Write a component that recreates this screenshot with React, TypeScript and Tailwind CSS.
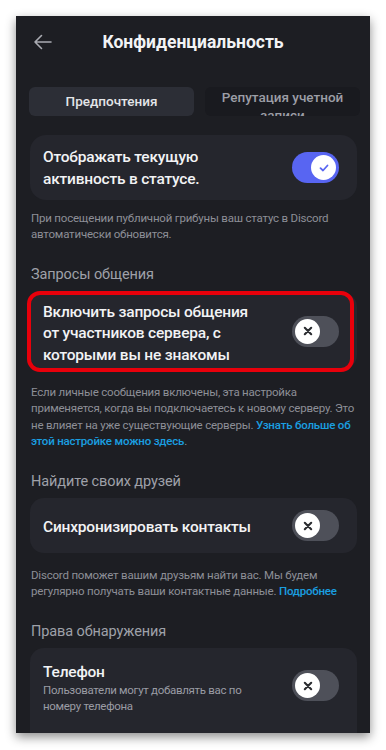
import React from "react";

const font = { fontFamily: 'Roboto, "Noto Sans", sans-serif' };

function Toggle({ on }: { on: boolean }) {
  if (on) {
    return (
      <div className="w-[47px] h-[31px] rounded-full bg-[#5865f2] flex items-center justify-end pr-[3px] shrink-0">
        <div className="w-[25px] h-[25px] rounded-full bg-white flex items-center justify-center">
          <svg width="12" height="12" viewBox="0 0 12 12" fill="none">
            <path d="M2.5 6.2 L5 8.5 L9.5 3.5" stroke="#5865f2" strokeWidth="1.8" strokeLinecap="round" strokeLinejoin="round" />
          </svg>
        </div>
      </div>
    );
  }
  return (
    <div className="w-[47px] h-[31px] rounded-full bg-[#4e5059] flex items-center justify-start pl-[3px] shrink-0">
      <div className="w-[25px] h-[25px] rounded-full bg-white flex items-center justify-center">
        <svg width="12" height="12" viewBox="0 0 12 12" fill="none">
          <path d="M2.8 2.8 L9.2 9.2 M9.2 2.8 L2.8 9.2" stroke="#2b2d31" strokeWidth="2.1" strokeLinecap="round" />
        </svg>
      </div>
    </div>
  );
}

export default function App() {
  return (
    <div className="w-[386px] h-[750px] bg-white pt-4 pl-4 overflow-hidden" style={font}>
      <div className="w-[354px] h-[717px] bg-[#1d1e23] overflow-hidden flex flex-col shadow-[0_4px_10px_rgba(0,0,0,0.45)]">
        {/* Header */}
        <div className="h-[52px] flex items-center relative shrink-0">
          <div className="pl-[17px] w-[60px]">
            <svg width="19" height="16" viewBox="0 0 19 16" fill="none">
              <path d="M18 8 H2 M8.5 1.5 L2 8 L8.5 14.5" stroke="#a9abb2" strokeWidth="1.6" strokeLinecap="round" strokeLinejoin="round" />
            </svg>
          </div>
          <div className="absolute left-0 right-0 text-center text-[17.5px] font-bold text-[#f2f3f5] pointer-events-none">
            Конфиденциальность
          </div>
        </div>

        {/* Tabs */}
        <div className="mt-[19px] mx-[13px] flex gap-[11px] h-[29px] shrink-0">
          <div className="w-[165px] rounded-[6px] bg-[#2c2e36] flex items-center justify-center text-[13.5px] font-medium text-[#e3e5e8]">
            Предпочтения
          </div>
          <div className="flex-1 -mr-[3px] bg-[#191a1f] rounded-[6px] overflow-hidden flex justify-center">
            <div className="text-[13.5px] font-medium text-[#9c9ea6] leading-[18px] pt-[1px] text-center w-[150px]">
              Репутация учетной записи
            </div>
          </div>
        </div>

        <div className="px-[14px] pr-[13px] flex flex-col">
          {/* Card 1 */}
          <div className="mt-[19px] h-[65px] rounded-[16px] bg-[#25262d] flex items-center pl-[13px] pr-[18px]">
            <div className="flex-1 text-[15.5px] tracking-[-0.2px] font-medium text-[#f2f3f5] leading-[22px]">
              Отображать текущую<br />активность в статусе.
            </div>
            <Toggle on />
          </div>
          <div className="mt-[10px] px-[1px] text-[11.5px] tracking-[-0.2px] leading-[16px] text-[#8d8f97]">
            При посещении публичной грибуны ваш статус в Discord автоматически обновится.
          </div>

          {/* Section 2 */}
          <div className="mt-[23px] text-[14.5px] tracking-[-0.1px] leading-[20px] text-[#9fa1a9] px-[1px]">
            Запросы общения
          </div>
          <div className="relative mt-[8px] h-[76px] rounded-[14px] bg-[#25262d] flex items-center pl-[13px] pr-[18px]">
            <div className="flex-1 text-[15.5px] tracking-[-0.2px] font-medium text-[#f2f3f5] leading-[21.5px] pt-[6px]">
              Включить запросы общения<br />от участников сервера, с<br />которыми вы не знакомы
            </div>
            <Toggle on={false} />
            <div className="absolute left-[-3px] top-[-2px] w-[327px] h-[81px] rounded-[13px] border-[4px] border-[#e8000b] pointer-events-none" />
          </div>
          <div className="mt-[15px] px-[1px] text-[11.5px] tracking-[-0.2px] leading-[16.3px] text-[#8d8f97]">
            Если личные сообщения включены, эта настройка применяется, когда вы подключаетесь к новому серверу. Это не влияет на уже существующие серверы.{" "}
            <span className="text-[#1a9fe0] font-medium">Узнать больше об этой настройке можно здесь</span>.
          </div>

          {/* Section 3 */}
          <div className="mt-[23px] text-[14.5px] tracking-[-0.1px] leading-[20px] text-[#9fa1a9] px-[1px]">
            Найдите своих друзей
          </div>
          <div className="mt-[6px] h-[55px] rounded-[14px] bg-[#25262d] flex items-center pl-[13px] pr-[18px]">
            <div className="flex-1 text-[15.5px] tracking-[-0.2px] font-medium text-[#f2f3f5] leading-[22px] pt-[2px]">
              Синхронизировать контакты
            </div>
            <Toggle on={false} />
          </div>
          <div className="mt-[14px] px-[1px] text-[11.5px] tracking-[-0.2px] leading-[16px] text-[#8d8f97]">
            Discord поможет вашим друзьям найти вас. Мы будем регулярно получать ваши контактные данные.{" "}
            <span className="text-[#1a9fe0] font-medium">Подробнее</span>
          </div>

          {/* Section 4 */}
          <div className="mt-[23px] text-[14.5px] tracking-[-0.1px] leading-[20px] text-[#9fa1a9] px-[1px]">
            Права обнаружения
          </div>
          <div className="mt-[6px] h-[100px] rounded-[14px] bg-[#25262d] flex items-start pl-[13px] pr-[18px] pt-[14px]">
            <div className="flex-1">
              <div className="text-[15.5px] tracking-[-0.2px] font-medium text-[#f2f3f5] leading-[20px]">Телефон</div>
              <div className="text-[11.5px] tracking-[-0.3px] text-[#9a9ca4] leading-[16px]">
                Пользователи могут добавлять вас по<br />номеру телефона
              </div>
            </div>
            <div className="mt-[8px]">
              <Toggle on={false} />
            </div>
          </div>
        </div>
      </div>
    </div>
  );
}
